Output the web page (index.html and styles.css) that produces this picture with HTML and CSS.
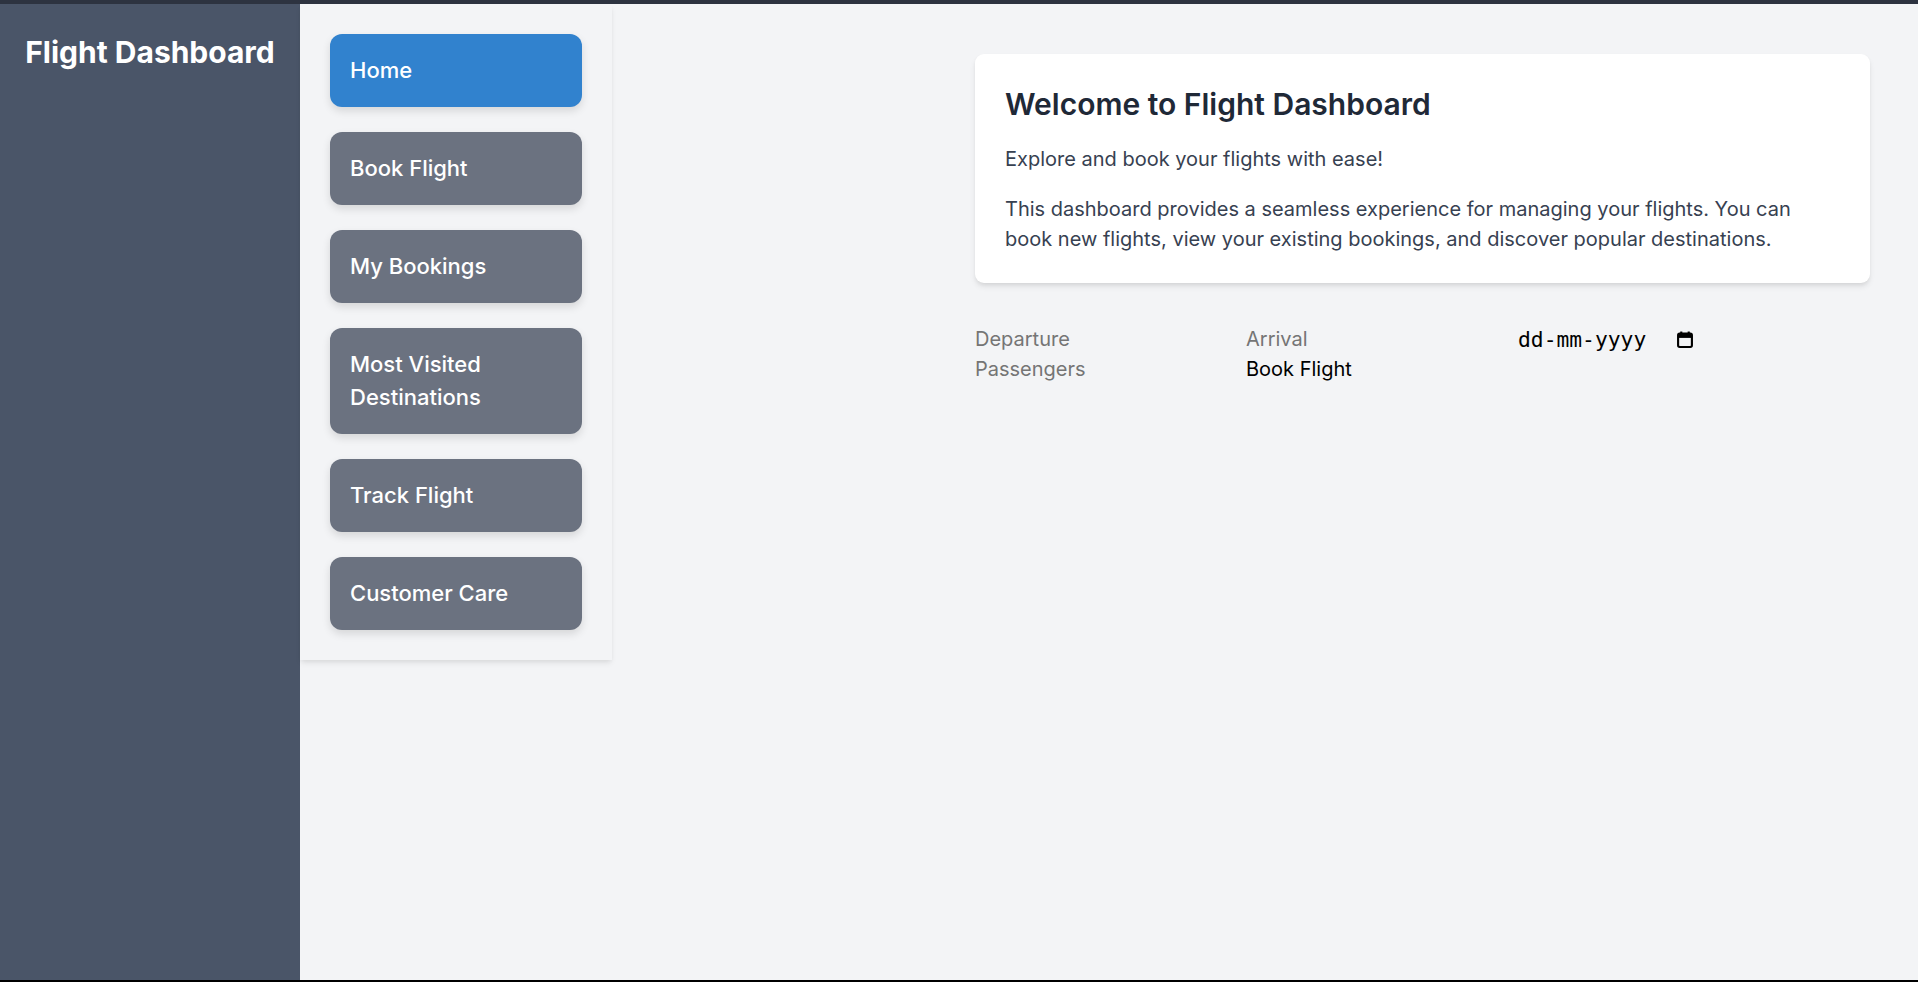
FILE: index.html
```html
<!DOCTYPE html>
<html lang="en">
<head>
<meta charset="utf-8">
<title>Flight Dashboard</title>
<link rel="stylesheet" href="styles.css">
</head>
<body>
<div class="frame">
  <aside class="sidebar">
    <h1 class="brand">Flight Dashboard</h1>
  </aside>
  <nav class="menu">
    <a class="menu-item active" href="#">Home</a>
    <a class="menu-item" href="#">Book Flight</a>
    <a class="menu-item" href="#">My Bookings</a>
    <a class="menu-item" href="#">Most Visited Destinations</a>
    <a class="menu-item" href="#">Track Flight</a>
    <a class="menu-item" href="#">Customer Care</a>
  </nav>
  <main class="main">
    <div class="content">
      <section class="card">
        <h2 class="card-title">Welcome to Flight Dashboard</h2>
        <p class="lead">Explore and book your flights with ease!</p>
        <p class="desc">This dashboard provides a seamless experience for managing your flights. You can book new flights, view your existing bookings, and discover popular destinations.</p>
      </section>
      <form class="booking">
        <input class="field" type="text" placeholder="Departure">
        <input class="field" type="text" placeholder="Arrival">
        <div class="date-field">
          <span class="date-text">dd-mm-yyyy</span>
          <svg class="cal-icon" width="16" height="17" viewBox="0 0 15 16" aria-hidden="true">
            <rect x="1" y="2.5" width="13" height="12.5" rx="1.5" fill="none" stroke="#000" stroke-width="2"/>
            <rect x="1" y="2.5" width="13" height="4" fill="#000"/>
            <rect x="3" y="0.5" width="2" height="3" fill="#000"/>
            <rect x="10" y="0.5" width="2" height="3" fill="#000"/>
          </svg>
        </div>
        <input class="field" type="number" placeholder="Passengers">
        <button class="book-btn" type="button">Book Flight</button>
      </form>
    </div>
  </main>
</div>
</body>
</html>
```
FILE: styles.css
```css
* { box-sizing: border-box; }

html, body {
  margin: 0;
  padding: 0;
  height: 100%;
}

body {
  font-family: Inter, "Noto Sans", sans-serif;
  background: #f3f4f6;
}

.frame {
  display: flex;
  height: 982px;
  border-top: 4px solid #2d3340;
  border-bottom: 2px solid #000;
  background: #f3f4f6;
}

.sidebar {
  width: 300px;
  flex-shrink: 0;
  background: #4a5568;
  padding-top: 30px;
}

.brand {
  margin: 0;
  color: #fff;
  font-size: 30px;
  line-height: 36px;
  font-weight: 700;
  text-align: center;
}

.menu {
  width: 312px;
  flex-shrink: 0;
  align-self: flex-start;
  padding: 30px;
  display: flex;
  flex-direction: column;
  gap: 25px;
  background: #f3f4f6;
  box-shadow: 0 4px 6px -1px rgba(0,0,0,0.08), 0 2px 4px -1px rgba(0,0,0,0.05);
}

.menu-item {
  display: block;
  padding: 20px;
  border-radius: 12px;
  background: #6b7280;
  color: #fff;
  text-decoration: none;
  font-size: 22px;
  line-height: 33px;
  font-weight: 500;
  box-shadow: 0 4px 8px rgba(0,0,0,0.12);
}

.menu-item.active {
  background: #3182ce;
}

.main {
  flex: 1;
  padding: 50px 48px 48px;
  display: flex;
  flex-direction: column;
}

.content {
  width: 895px;
  margin-left: auto;
}

.card {
  background: #fff;
  border-radius: 9px;
  padding: 32px 30px 29px;
  box-shadow: 0 4px 6px -1px rgba(0,0,0,0.1), 0 2px 4px -1px rgba(0,0,0,0.06);
}

.card-title {
  margin: 0 0 22px;
  font-size: 30px;
  line-height: 36px;
  font-weight: 600;
  color: #1f2937;
}

.lead, .desc {
  font-size: 20px;
  line-height: 30px;
  color: #374151;
}

.lead { margin: 0 0 20px; }
.desc { margin: 0; }

.booking {
  margin-top: 41px;
  display: flex;
  flex-wrap: wrap;
}

.field, .book-btn {
  width: 271px;
  border: 0;
  background: transparent;
  padding: 3px 0;
  font-family: Inter, "Noto Sans", sans-serif;
  font-size: 20px;
  line-height: 24px;
  height: 30px;
  color: #000;
  text-align: left;
  outline: none;
}

.field::placeholder { color: #757575; }

.field::-webkit-outer-spin-button,
.field::-webkit-inner-spin-button { -webkit-appearance: none; margin: 0; }

.date-field {
  width: 184px;
  height: 30px;
  display: flex;
  align-items: center;
  gap: 31px;
  padding: 1px 0 0 1px;
}

.date-text {
  font-family: "DejaVu Sans Mono", monospace;
  font-size: 21.3px;
  color: #000;
}

.cal-icon { flex-shrink: 0; }
```
